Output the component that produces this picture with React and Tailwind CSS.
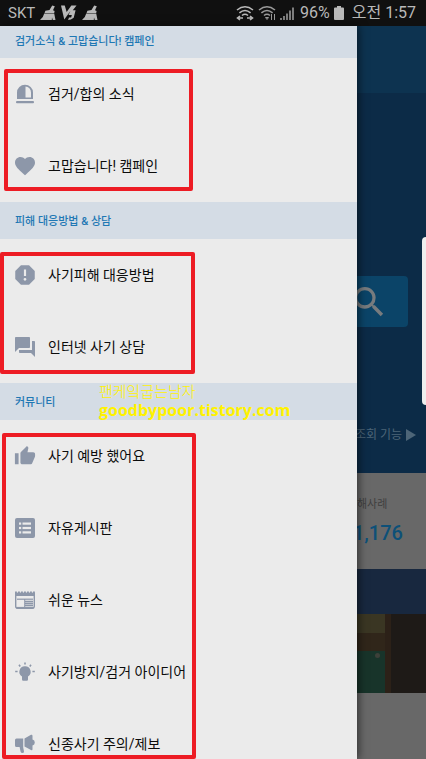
import React from 'react';
import { MdFavorite, MdReport, MdForum, MdThumbUp, MdSearch } from 'react-icons/md';

const SirenIcon = () => (
    <svg viewBox="0 0 20 20" className="h-5 w-5" fill="currentColor">
        <path fillRule="evenodd" d="M2 15V8.500a8 7.800 0 0 1 16 0V15ZM10.500 2.500V13.500H16V8.500A5.800 6 0 0 0 10.500 2.500Z" />
        <rect x="1" y="17" width="18" height="2.300" rx="1" />
    </svg>
);

const BoardIcon = () => (
    <svg viewBox="0 0 20 20" className="h-5 w-5">
        <rect width="20" height="20" rx="2" fill="currentColor" />
        <g fill="#ebebeb">
            <rect x="4" y="4.500" width="2.200" height="2.200" />
            <rect x="4" y="8.900" width="2.200" height="2.200" />
            <rect x="4" y="13.300" width="2.200" height="2.200" />
            <rect x="7.500" y="4.500" width="8.500" height="2.200" />
            <rect x="7.500" y="8.900" width="8.500" height="2.200" />
            <rect x="7.500" y="13.300" width="8.500" height="2.200" />
        </g>
    </svg>
);

const NewsIcon = () => (
    <svg viewBox="0 0 20 20" className="h-5 w-5" fill="none" stroke="currentColor">
        <path d="M.700 4V16.500a1.700 1.700 0 0 0 1.700 1.700H17.600a1.700 1.700 0 0 0 1.700-1.700V4" strokeWidth="1.400" />
        <path d="M0 4.300H20" strokeWidth="3.400" />
        <path d="M0 2.200H20" strokeWidth="1.600" strokeDasharray="1.900 1.100" />
        <path d="M2 9.200H18" strokeWidth="1.200" />
        <path d="M10 11.500H18M10 13.500H18M10 15.500H18" strokeWidth="1.300" />
        <path d="M9.700 9V17" strokeWidth="1" />
        <path d="M1 17.700H19" strokeWidth="1.600" />
    </svg>
);

const IdeaIcon = () => (
    <svg viewBox="0 0 20 20" className="h-5 w-5" fill="currentColor">
        <path d="M10 4.300a5.500 5.500 0 0 1 3 10.200V17.500a1.200 1.200 0 0 1-1.200 1.200H8.200A1.200 1.200 0 0 1 7 17.500V14.500A5.500 5.500 0 0 1 10 4.300Z" />
        <path d="M10 .500V2.600M4 2.800 5.200 4.400M16 2.800 14.800 4.400M.200 9.500H2.600M17.400 9.500H19.800" stroke="currentColor" strokeWidth="1.600" />
    </svg>
);

const HornIcon = () => (
    <svg viewBox="0 0 20 20" className="h-5 w-5" fill="currentColor">
        <path d="M9.500 4.500 16 .800Q17.500.300 17.500 2V5.500Q19.800 6.200 19.800 8.500T17.500 11.500V15Q17.500 17 16 16L9.500 12.500Z" />
        <path d="M8.200 4.500V13.500L9 17.500Q9 19 7.500 19T5.600 17.800L4.600 13H1.500Q0 13 0 11.500V6Q0 4.500 1.500 4.500Z" />
    </svg>
);

const BroomIcon = () => (
    <svg viewBox="0 0 16 16" className="h-4 w-4" fill="currentColor">
        <path d="M12.200.500 14.800 1.200 13 5.200 14.600 6 14.200 8H4.600L5.400 5.800 9.500 5Z" />
        <path d="M4.200 8.500H14.200L15.500 15H12.800L12 12.500 11.800 15H0Q3.400 12.600 4.200 8.500Z" />
    </svg>
);

const VaccineIcon = () => (
    <svg viewBox="0 0 17 16" className="h-4 w-4" fill="currentColor">
        <path d="M0 0H4L6 7 11 0H16.500L12.500 5H15.500L13.500 13Q10.500 15.500 7.500 15.500L8.500 12.800H10.800L11.500 10H8L10 6 3.500 15Z" />
    </svg>
);

const WifiIcon = ({ children, className }) => (
    <svg viewBox="0 0 18 16" className={className} fill="none" stroke="currentColor" strokeWidth="1.600">
        <path d="M1 5Q9-1.500 17 5M3.400 7.800Q9 3.200 14.600 7.800M6 10.500Q9 8 12 10.500" />
        {children}
    </svg>
);

const SignalIcon = () => (
    <svg viewBox="0 0 14 14" className="h-[14px] w-[14px]" stroke="currentColor" strokeWidth="1.300">
        <path d="M1 14V12M4 14V10M7 14V7.500M10 14V4.500M13 14V1.500" />
    </svg>
);

const sections = [
    {
        title: '검거소식 & 고맙습니다! 캠페인',
        bar: 'h-8',
        mark: 'left-1 top-[11px] bottom-[11px] w-[189px]',
        items: [
            { label: '검거/합의 소식', icon: SirenIcon },
            { label: '고맙습니다! 캠페인', icon: MdFavorite, size: 24 },
        ],
    },
    {
        title: '피해 대응방법 & 상담',
        bar: 'h-[37px] pt-1',
        mark: 'left-0 top-[13px] bottom-[9px] w-[195px]',
        items: [
            { label: '사기피해 대응방법', icon: MdReport, size: 26 },
            { label: '인터넷 사기 상담', icon: MdForum, size: 24 },
        ],
    },
    {
        title: '커뮤니티',
        bar: 'h-[37px] pt-1',
        mark: 'left-[2px] top-[13px] bottom-[21px] w-[194px]',
        watermark: true,
        items: [
            { label: '사기 예방 했어요', icon: MdThumbUp, size: 22 },
            { label: '자유게시판', icon: BoardIcon },
            { label: '쉬운 뉴스', icon: NewsIcon },
            { label: '사기방지/검거 아이디어', icon: IdeaIcon },
            { label: '신종사기 주의/제보', icon: HornIcon },
        ],
    },
];

const StatusBar = () => (
    <header className="flex h-[26px] shrink-0 items-center justify-between bg-[#101010] pl-2 pr-[10px] text-[16px] leading-none text-[#b9b9b9]">
        <div className="flex items-center gap-[5px]">
            <span className="text-[15px]">SKT</span>
            <BroomIcon />
            <VaccineIcon />
            <BroomIcon />
        </div>
        <div className="flex items-center gap-1">
            <WifiIcon className="h-4 w-[18px]">
                <path d="M1 13H7M11 13H17M4 11 1.500 13 4 15M14 11 16.500 13 14 15" />
            </WifiIcon>
            <WifiIcon className="h-4 w-[18px] text-[#9a9a9a]">
                <path d="M7.500 12.500H10.500L9 14.500ZM13.500 9V15M16.500 9V15" strokeWidth="1" />
            </WifiIcon>
            <SignalIcon />
            <span className="pl-[2px]">96%</span>
            <svg viewBox="0 0 10 14" className="h-[14px] w-[10px]" fill="currentColor">
                <path d="M3 0H7V1.500H9Q10 1.500 10 2.500V13Q10 14 9 14H1Q0 14 0 13V2.500Q0 1.500 1 1.500H3Z" />
            </svg>
            <span className="pl-1">오전 1:57</span>
        </div>
    </header>
);

const Drawer = () => (
    <nav className="z-10 w-[83.8%] shrink-0 bg-[#ebebeb] shadow-[2px_0_8px_rgba(0,0,0,0.5)]">
        {sections.map((section) => (
            <section key={section.title}>
                <div className={`relative flex items-center bg-[#d4dce5] pl-[15px] ${section.bar}`}>
                    <h2 className="text-[11px] font-medium text-[#1f78b4]">{section.title}</h2>
                    {section.watermark && (
                        <div className="absolute left-[99px] top-0 text-[#fff200]">
                            <p className="font-['Noto_Sans_CJK_KR',sans-serif] text-[15px] leading-[16px] font-light">팬케잌굽는남자</p>
                            <p className="font-['Open_Sans',sans-serif] text-[16px] leading-[22px] font-bold">goodbypoor.tistory.com</p>
                        </div>
                    )}
                </div>
                <div className="relative">
                    <ul>
                        {section.items.map((item) => (
                            <li key={item.label}>
                                <a href="#" className="flex h-[72px] items-center gap-[10px] pl-3 text-[14px] text-[#0c0c0c]">
                                    <span className="flex w-[26px] justify-center text-[#8d97a9]"><item.icon size={item.size} /></span>
                                    {item.label}
                                </a>
                            </li>
                        ))}
                    </ul>
                    <div className={`pointer-events-none absolute rounded-[2px] border-4 border-[#ed1c24] ${section.mark}`}></div>
                </div>
            </section>
        ))}
    </nav>
);

// Main screen, dimmed while the drawer is open
const DimmedPage = () => (
    <main className="relative flex min-w-0 flex-1 flex-col overflow-hidden whitespace-nowrap bg-[#0c2b47]">
        <div className="h-[67px] shrink-0 bg-[#0d3350]"></div>
        <div className="flex h-[380px] shrink-0 flex-col pt-[183px]">
            <button aria-label="검색" className="flex h-[51px] w-[51px] items-center rounded-r bg-[#0b4468] text-[#777b7e]">
                <MdSearch size={40} className="-ml-2 shrink-0" />
            </button>
            <a href="#" className="mt-[99px] flex items-center gap-1 text-[12px] text-[#4d6578]">
                <span className="-ml-[2px]">조회 기능</span>
                <svg viewBox="0 0 10 12" className="h-3 w-[10px]" fill="currentColor"><path d="M0 0 10 6 0 12Z" /></svg>
            </a>
        </div>
        <div className="h-[96px] shrink-0 bg-[#686868] pt-6">
            <p className="text-[11px] leading-4 text-[#404040]">해사례</p>
            <p className="-ml-1 mt-2 text-[20px] leading-6 font-medium text-[#0d5078]">1,176</p>
        </div>
        <div className="h-[45px] shrink-0 bg-[#18283f]"></div>
        <div className="flex h-[79px] shrink-0 bg-[#1e1a17]">
            <div className="flex w-[28px] flex-col bg-[#18342a]">
                <div className="h-[19px] bg-[#3a3623]"></div>
                <div className="h-[18px] bg-[#30261a]"></div>
                <div className="mt-[2px] ml-[18px] h-[5px] w-[5px] rounded-full bg-[#3d4039]"></div>
            </div>
            <div className="w-[6px] bg-[#2c2118]"></div>
        </div>
        <div className="flex-1 bg-[#686868]"></div>
        <div className="absolute right-0 top-[211px] h-[168px] w-1 rounded-l bg-[#eeeeee]"></div>
    </main>
);

export default function App() {
    return (
        <div className="flex h-screen flex-col overflow-hidden font-[Roboto,'Noto_Sans_CJK_KR',sans-serif]">
            <StatusBar />
            <div className="flex min-h-0 flex-1">
                <Drawer />
                <DimmedPage />
            </div>
        </div>
    );
}
